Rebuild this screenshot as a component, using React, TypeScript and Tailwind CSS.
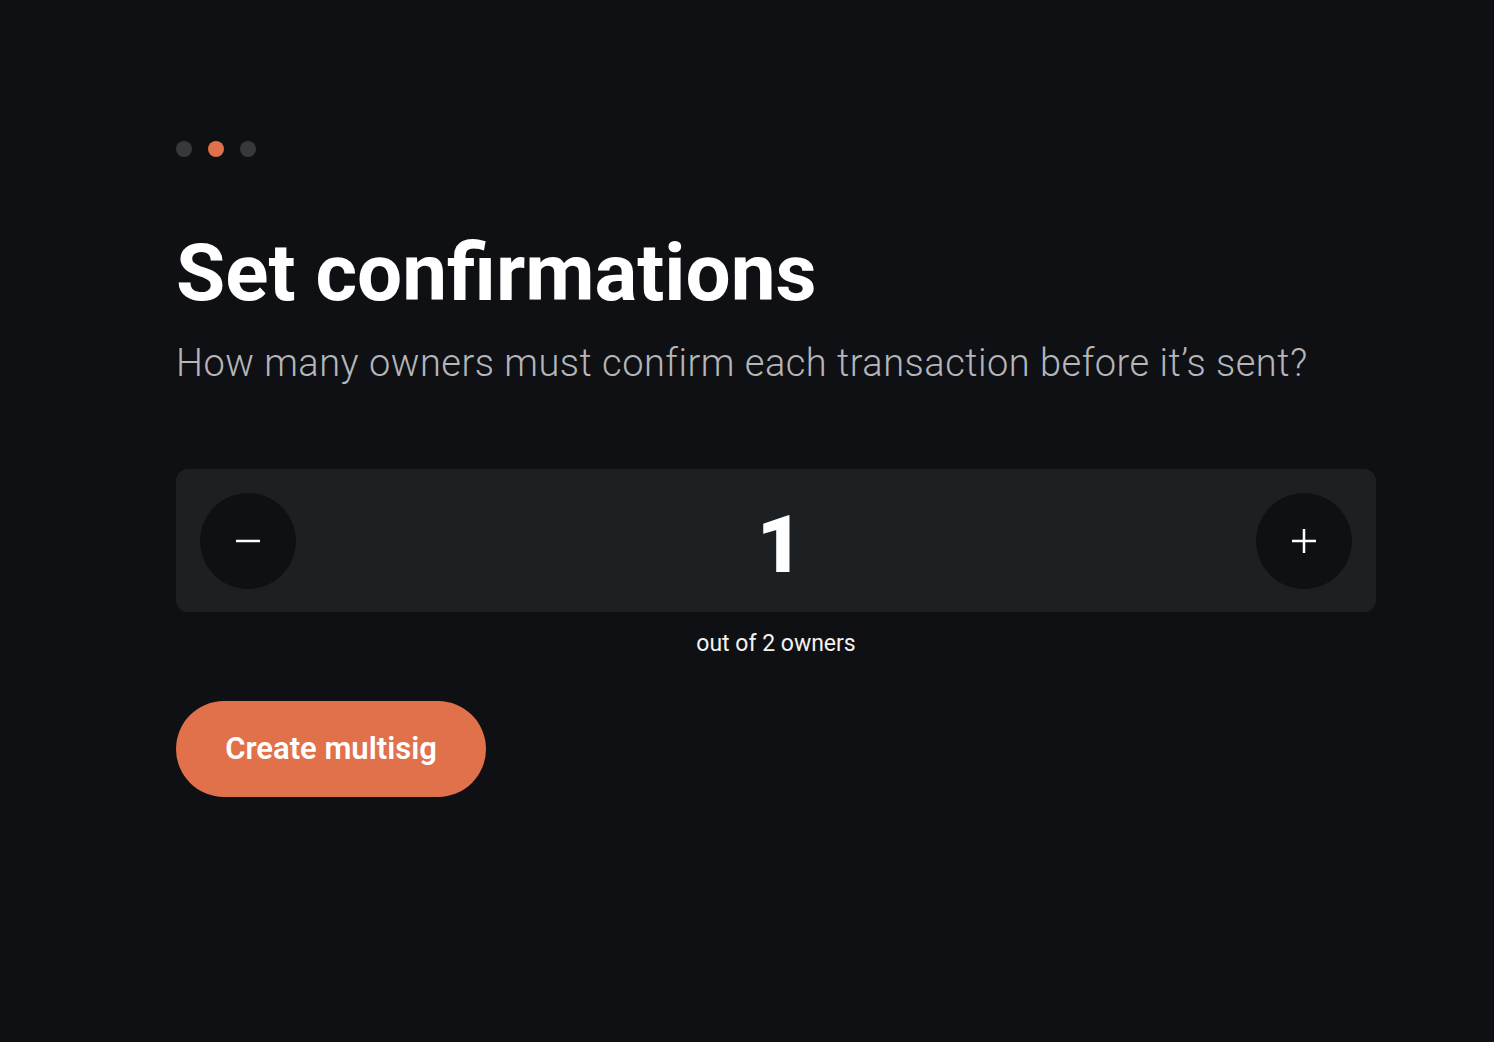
import { useState } from "react";

const font = { fontFamily: "Roboto, 'Noto Sans', sans-serif" };

export default function App() {
  const [count, setCount] = useState<number>(1);
  const owners = 2;

  return (
    <div
      className="min-h-[1042px] w-full bg-[#0f1014] text-white"
      style={font}
    >
      <div className="flex flex-col pl-[176px] pr-[118px] pt-[141px]">
        {/* Step dots */}
        <div className="flex items-center gap-4">
          <span className="h-4 w-4 rounded-full bg-[#37393a]" />
          <span className="h-4 w-4 rounded-full bg-[#e0714a]" />
          <span className="h-4 w-4 rounded-full bg-[#37393a]" />
        </div>

        {/* Header */}
        <h1 className="mt-[71px] text-[80px] font-bold leading-[90px]">
          Set confirmations
        </h1>
        <p className="mt-[23px] text-[38px] font-light leading-[44px] tracking-[0.5px] text-[#b4b6b9]">
          How many owners must confirm each transaction before it’s sent?
        </p>

        {/* Stepper */}
        <div className="mt-[84px] flex h-[143px] w-[1200px] items-center justify-between rounded-xl bg-[#1d2022] px-6">
          <button
            onClick={() => setCount((c) => Math.max(1, c - 1))}
            className="flex h-24 w-24 items-center justify-center rounded-full bg-[#0f1014]"
          >
            <svg width="26" height="26" viewBox="0 0 26 26">
              <path d="M1 13h24" stroke="white" strokeWidth="2.5" />
            </svg>
          </button>
          <span className="pl-2 pt-2 text-[80px] font-black leading-none">{count}</span>
          <button
            onClick={() => setCount((c) => Math.min(owners, c + 1))}
            className="flex h-24 w-24 items-center justify-center rounded-full bg-[#0f1014]"
          >
            <svg width="26" height="26" viewBox="0 0 26 26">
              <path d="M1 13h24M13 1v24" stroke="white" strokeWidth="2.5" />
            </svg>
          </button>
        </div>
        <p className="mt-[18px] w-[1200px] text-center text-[23px] leading-[28px] text-[#f2f2f2]">
          out of {owners} owners
        </p>

        {/* Submit */}
        <button className="mt-[43px] flex h-24 w-[310px] items-center justify-center rounded-full bg-[#e0714a] text-[31px] font-semibold text-white">
          Create multisig
        </button>
      </div>
    </div>
  );
}
